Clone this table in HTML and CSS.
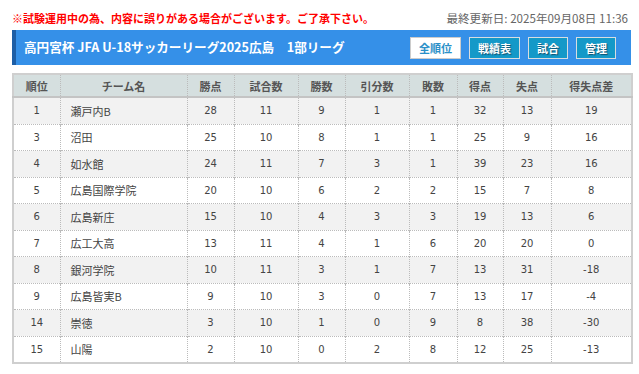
FILE: index.html
```html
<!DOCTYPE html>
<html lang="ja">
<head>
<meta charset="utf-8">
<title>順位表</title>
<link rel="stylesheet" href="styles.css">
</head>
<body>
<div class="page">
  <div class="topline">
    <span class="notice">※試験運用中の為、内容に誤りがある場合がございます。ご了承下さい。</span>
    <span class="updated">最終更新日: 2025年09月08日 11:36</span>
  </div>
  <div class="titlebar">
    <h1 class="title">高円宮杯 JFA U-18サッカーリーグ2025広島　1部リーグ</h1>
    <nav class="navs">
      <a class="btn btn-active">全順位</a>
      <a class="btn">戦績表</a>
      <a class="btn">試合</a>
      <a class="btn">管理</a>
    </nav>
  </div>
  <table class="standings">
    <colgroup>
      <col class="c47"><col class="c127"><col class="c47"><col class="c64"><col class="c47"><col class="c64"><col class="c48"><col class="c46"><col class="c48"><col class="c81">
    </colgroup>
    <thead>
      <tr><th>順位</th><th>チーム名</th><th>勝点</th><th>試合数</th><th>勝数</th><th>引分数</th><th>敗数</th><th>得点</th><th>失点</th><th>得失点差</th></tr>
    </thead>
    <tbody>
      <tr><td>1</td><td class="team">瀬戸内B</td><td>28</td><td>11</td><td>9</td><td>1</td><td>1</td><td>32</td><td>13</td><td>19</td></tr>
      <tr><td>3</td><td class="team">沼田</td><td>25</td><td>10</td><td>8</td><td>1</td><td>1</td><td>25</td><td>9</td><td>16</td></tr>
      <tr><td>4</td><td class="team">如水館</td><td>24</td><td>11</td><td>7</td><td>3</td><td>1</td><td>39</td><td>23</td><td>16</td></tr>
      <tr><td>5</td><td class="team">広島国際学院</td><td>20</td><td>10</td><td>6</td><td>2</td><td>2</td><td>15</td><td>7</td><td>8</td></tr>
      <tr><td>6</td><td class="team">広島新庄</td><td>15</td><td>10</td><td>4</td><td>3</td><td>3</td><td>19</td><td>13</td><td>6</td></tr>
      <tr><td>7</td><td class="team">広工大高</td><td>13</td><td>11</td><td>4</td><td>1</td><td>6</td><td>20</td><td>20</td><td>0</td></tr>
      <tr><td>8</td><td class="team">銀河学院</td><td>10</td><td>11</td><td>3</td><td>1</td><td>7</td><td>13</td><td>31</td><td>-18</td></tr>
      <tr><td>9</td><td class="team">広島皆実B</td><td>9</td><td>10</td><td>3</td><td>0</td><td>7</td><td>13</td><td>17</td><td>-4</td></tr>
      <tr><td>14</td><td class="team">崇徳</td><td>3</td><td>10</td><td>1</td><td>0</td><td>9</td><td>8</td><td>38</td><td>-30</td></tr>
      <tr><td>15</td><td class="team">山陽</td><td>2</td><td>10</td><td>0</td><td>2</td><td>8</td><td>12</td><td>25</td><td>-13</td></tr>
    </tbody>
  </table>
</div>
</body>
</html>
```
FILE: styles.css
```css
html, body {
  margin: 0;
  padding: 0;
  background: #ffffff;
}
body {
  font-family: "Noto Sans CJK JP", "Noto Sans", sans-serif;
  color: #444;
}
.page {
  width: 619px;
  margin-left: 12px;
  padding-top: 10px;
}
.topline {
  display: flex;
  justify-content: space-between;
  align-items: center;
  height: 16px;
  padding-right: 3px;
}
.notice {
  color: #ff0000;
  font-weight: bold;
  font-size: 11px;
  line-height: 16px;
}
.updated {
  color: #666;
  font-size: 11.6px;
  line-height: 16px;
}
.titlebar {
  margin-top: 4px;
  height: 35px;
  background: #3590e8;
  border-left: 4px solid #1d5ea6;
  display: flex;
  align-items: center;
  justify-content: space-between;
  padding: 0 15px 0 8px;
}
.title {
  margin: 0;
  font-size: 12.6px;
  font-weight: bold;
  color: #ffffff;
  line-height: 1;
}
.navs {
  display: flex;
  gap: 8px;
}
.btn {
  display: flex;
  align-items: center;
  justify-content: center;
  height: 20px;
  padding: 0 8px;
  background: #1499c8;
  border: 1px solid #d8dde0;
  color: #ffffff;
  font-size: 11px;
  font-weight: bold;
  text-shadow: 1px 1px 1px #0d4f6c;
}
.btn-active {
  background: #ffffff;
  color: #2a90c8;
  text-shadow: none;
  border-color: #cccccc;
}
.standings {
  margin-top: 8px;
  width: 619px;
  border-collapse: collapse;
  table-layout: fixed;
  border: 2px solid #cfcfcf;
  font-size: 11px;
}
.c47 { width: 47px; }
.c127 { width: 127px; }
.c64 { width: 64px; }
.c48 { width: 48px; }
.c46 { width: 46px; }
.c81 { width: 81px; }
.standings th {
  height: 21px;
  background: #d5dfdf;
  color: #555;
  font-weight: bold;
  font-size: 11px;
  border-left: 1px dotted #bbbbbb;
  border-bottom: 2px solid #c4c4c4;
  padding: 0;
}
.standings td {
  height: 25.5px;
  padding: 0;
  text-align: center;
  font-family: "DejaVu Sans", "Noto Sans CJK JP", sans-serif;
  font-size: 10px;
  color: #444;
  border-left: 1px dotted #bbbbbb;
  border-top: 1px dotted #bbbbbb;
}
.standings td.team {
  text-align: left;
  padding-left: 10px;
  font-family: "Noto Sans CJK JP", sans-serif;
  font-size: 11px;
}
.standings tbody tr:nth-child(odd) {
  background: #f2f2f2;
}
.standings tbody tr:nth-child(even) {
  background: #ffffff;
}
```
